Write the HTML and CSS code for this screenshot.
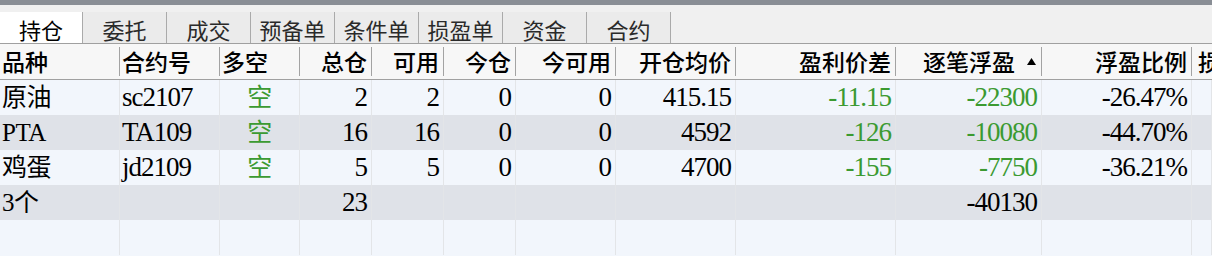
FILE: index.html
```html
<!DOCTYPE html>
<html lang="zh">
<head>
<meta charset="utf-8">
<title>持仓</title>
<link rel="stylesheet" href="styles.css">
</head>
<body>
<div class="topbar"></div>
<div class="tabstrip">
  <div class="tab active">持仓</div>
  <div class="tab">委托</div>
  <div class="tab">成交</div>
  <div class="tab">预备单</div>
  <div class="tab">条件单</div>
  <div class="tab">损盈单</div>
  <div class="tab">资金</div>
  <div class="tab">合约</div>
</div>
<div class="grid">
  <div class="row head">
    <div class="c l">品种</div>
    <div class="c l">合约号</div>
    <div class="c l">多空</div>
    <div class="c r">总仓</div>
    <div class="c r">可用</div>
    <div class="c r">今仓</div>
    <div class="c r">今可用</div>
    <div class="c r">开仓均价</div>
    <div class="c r">盈利价差</div>
    <div class="c r sorted">逐笔浮盈<svg class="tri" width="9" height="7" viewBox="0 0 9 7"><path d="M4.5 0 L9 7 L0 7 Z" fill="#000"/></svg></div>
    <div class="c r">浮盈比例</div>
    <div class="c l last">损</div>
  </div>
  <div class="row odd">
    <div class="c l">原油</div>
    <div class="c l">sc2107</div>
    <div class="c m g">空</div>
    <div class="c r">2</div>
    <div class="c r">2</div>
    <div class="c r">0</div>
    <div class="c r">0</div>
    <div class="c r">415.15</div>
    <div class="c r g">-11.15</div>
    <div class="c r g">-22300</div>
    <div class="c r">-26.47%</div>
    <div class="c last"></div>
  </div>
  <div class="row even">
    <div class="c l">PTA</div>
    <div class="c l">TA109</div>
    <div class="c m g">空</div>
    <div class="c r">16</div>
    <div class="c r">16</div>
    <div class="c r">0</div>
    <div class="c r">0</div>
    <div class="c r">4592</div>
    <div class="c r g">-126</div>
    <div class="c r g">-10080</div>
    <div class="c r">-44.70%</div>
    <div class="c last"></div>
  </div>
  <div class="row odd">
    <div class="c l">鸡蛋</div>
    <div class="c l">jd2109</div>
    <div class="c m g">空</div>
    <div class="c r">5</div>
    <div class="c r">5</div>
    <div class="c r">0</div>
    <div class="c r">0</div>
    <div class="c r">4700</div>
    <div class="c r g">-155</div>
    <div class="c r g">-7750</div>
    <div class="c r">-36.21%</div>
    <div class="c last"></div>
  </div>
  <div class="row even">
    <div class="c l">3个</div>
    <div class="c l"></div>
    <div class="c m"></div>
    <div class="c r">23</div>
    <div class="c r"></div>
    <div class="c r"></div>
    <div class="c r"></div>
    <div class="c r"></div>
    <div class="c r"></div>
    <div class="c r">-40130</div>
    <div class="c r"></div>
    <div class="c last"></div>
  </div>
  <div class="row odd">
    <div class="c"></div>
    <div class="c"></div>
    <div class="c"></div>
    <div class="c"></div>
    <div class="c"></div>
    <div class="c"></div>
    <div class="c"></div>
    <div class="c"></div>
    <div class="c"></div>
    <div class="c"></div>
    <div class="c"></div>
    <div class="c last"></div>
  </div>
</div>
</body>
</html>
```
FILE: styles.css
```css
html, body {
  margin: 0;
  padding: 0;
}
body {
  width: 1212px;
  height: 256px;
  overflow: hidden;
  background: #f2f6fc;
  font-family: "Liberation Serif", "Noto Sans CJK SC", serif;
  color: #000;
}
.topbar {
  height: 5px;
  background: #898e95;
}
.tabstrip {
  height: 38px;
  background: #f0f0f0;
  border-bottom: 1px solid #a0a0a0;
  display: flex;
  align-items: flex-end;
}
.tab {
  box-sizing: border-box;
  width: 84px;
  height: 31px;
  padding-top: 2px;
  border-right: 1px solid #aaaaaa;
  background: #ebebeb;
  display: flex;
  align-items: center;
  justify-content: center;
  font-family: "Noto Sans CJK SC", sans-serif;
  font-size: 22px;
  line-height: 1;
  color: #2a2a2a;
}
.tab:first-child {
  width: 83px;
}
.tab.active {
  background: #ffffff;
  color: #000;
}
.row {
  display: grid;
  grid-template-columns: 120px 100px 80px 72px 72px 72px 100px 120px 160px 146px 150px 20px;
  height: 35px;
}
.row.head {
  box-sizing: border-box;
  height: 36px;
  padding: 3px 0;
  background: #f7f7f7;
  border-bottom: 1px solid #a0a0a0;
  font-family: "Noto Sans CJK SC", sans-serif;
  font-weight: 500;
}
.row.odd { background: #f2f6fc; }
.row.even { background: #dfe2e8; }
.c {
  box-sizing: border-box;
  display: flex;
  align-items: center;
  border-right: 1px solid #e3e5e8;
  font-size: 27px;
  letter-spacing: -1px;
  line-height: 1;
  white-space: nowrap;
}
.head .c {
  border-right: 1px solid #a3a3a3;
  font-size: 23px;
  letter-spacing: 0;
  padding: 0 7px;
}
.head .c.last {
  padding: 0 0 0 6px;
  border-right: none;
}
.c.l { justify-content: flex-start; padding-left: 2px; }
.c.r { justify-content: flex-end; padding-right: 4px; }
.c.m { justify-content: center; }
.c.g { color: #3b9a31; }
.row:not(.head) .c:first-child,
.row:not(.head) .c.m {
  font-size: 25px;
  letter-spacing: -0.5px;
}
.sorted {
  gap: 12px;
}
.tri {
  display: block;
  flex: none;
  margin-right: 1px;
}
```
